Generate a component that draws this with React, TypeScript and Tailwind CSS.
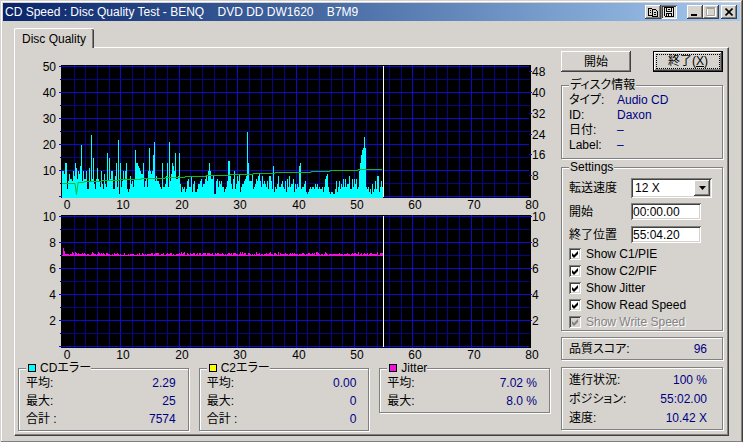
import { ReactNode, useState } from 'react'

const FONT = "font-['Liberation_Sans','Noto_Sans_CJK_JP',sans-serif] [font-feature-settings:'palt']"
const RAISED = 'bg-[#d6d3ce] shadow-[inset_-1px_-1px_#404040,inset_1px_1px_#fff,inset_-2px_-2px_#808080]'
const SUNKEN = 'shadow-[inset_1px_1px_#808080,inset_-1px_-1px_#fff,inset_2px_2px_#404040,inset_-2px_-2px_#d6d3ce]'
const ETCHED = 'border border-[#808080] shadow-[1px_1px_0_#fff,inset_1px_1px_0_#fff]'

// plot geometry
const LEFT = 44
const TOP = 5
const BOTTOM = 135
const UNIT = 5.84

// one value per sample, 0-50
const errors = [
  10, 10, 9, 13, 13, 3, 6, 9, 7, 7, 6, 10, 8, 13, 11, 7, 10, 9, 12, 20,
  6, 10, 7, 7, 10, 3, 3, 11, 6, 24, 7, 15, 5, 3, 7, 11, 7, 6, 4, 10,
  5, 3, 9, 5, 4, 17, 6, 15, 7, 10, 10, 3, 3, 8, 13, 4, 22, 1, 13, 4,
  6, 10, 7, 10, 13, 3, 2, 3, 8, 5, 6, 4, 7, 18, 13, 13, 12, 11, 10, 9,
  9, 13, 4, 6, 7, 4, 10, 19, 10, 9, 10, 16, 21, 6, 8, 6, 6, 5, 4, 3,
  13, 4, 4, 5, 8, 13, 4, 21, 6, 9, 13, 12, 10, 17, 7, 7, 8, 17, 5, 2,
  4, 3, 4, 2, 3, 6, 7, 4, 4, 8, 2, 5, 6, 2, 2, 3, 5, 5, 6, 7,
  4, 5, 5, 7, 8, 6, 10, 13, 10, 7, 7, 8, 1, 1, 6, 7, 4, 6, 5, 6,
  4, 4, 2, 3, 4, 6, 14, 14, 8, 5, 3, 7, 10, 3, 5, 8, 6, 9, 2, 4,
  5, 5, 6, 7, 8, 25, 13, 6, 6, 6, 9, 3, 4, 5, 7, 6, 8, 9, 6, 4,
  8, 5, 6, 5, 4, 6, 3, 8, 8, 6, 3, 12, 2, 4, 3, 5, 8, 4, 4, 5,
  6, 4, 3, 6, 2, 7, 4, 8, 4, 5, 5, 7, 2, 5, 3, 5, 4, 12, 13, 3,
  4, 4, 5, 6, 2, 1, 2, 3, 4, 3, 4, 4, 3, 5, 4, 5, 3, 4, 3, 3,
  4, 2, 4, 7, 8, 9, 4, 2, 1, 2, 2, 1, 1, 3, 6, 2, 4, 6, 3, 5,
  4, 7, 4, 7, 4, 5, 5, 8, 3, 3, 7, 4, 7, 5, 7, 3, 4, 10, 13, 16,
  18, 19, 23, 19, 4, 3, 4, 2, 3, 1, 5, 2, 3, 6, 3, 8, 8, 2, 4, 6,
  4,
]

// pixels above the 7 % base line
const jitter = errors.map((_, i) => {
  if (i === 1) return 8
  if (i === 2) return 5
  const s = Math.sin(i * 12.9898) * 43758.5453
  const n = s - Math.floor(s)
  return n > 0.95 ? 4 : n > 0.65 ? 3 : n > 0.25 ? 2 : 1
})

type PlotProps = {
  name: string
  max: number
  labels: number[]
  right: number[]
  children: ReactNode
}

function Plot({ name, max, labels, right, children }: PlotProps) {
  const y = (v: number) => Math.round(BOTTOM - (v / max) * (BOTTOM - TOP))
  const steps = Array.from({ length: 11 }, (_, i) => i)
  return (
    <svg viewBox="0 0 532 150" className="block h-auto w-full overflow-visible text-xs" role="img" aria-label={name}>
      <rect x="43" y="3" width="470" height="133" fill="#000" />
      <g shapeRendering="crispEdges">
        {Array.from({ length: 39 }, (_, i) => i + 1).map((i) => (
          <rect key={i} x={Math.round(LEFT + i * 2 * UNIT)} y="3" width="1" height="133" fill={i % 5 === 0 ? '#0c0cd0' : '#060684'} />
        ))}
        {steps.map((i) => (
          <rect
            key={i}
            x={i % 2 === 0 ? 41 : 42}
            y={y((max / 10) * i) - 1}
            width="470"
            height="1"
            fill={i % 2 === 0 ? '#0c0cd0' : '#060684'}
          />
        ))}
        {right.map((v) => (
          <rect key={v} x="511" y={y(v) - 1} width="3" height="1" fill="#0c0cd0" />
        ))}
      </g>
      {children}
      <rect x="365" y="4" width="1" height="131" fill="#fff" />
      <g fill="#000">
        {labels.map((v) => (
          <text key={v} x="38" y={y(v) + 4} textAnchor="end">{v}</text>
        ))}
        {right.map((v) => (
          <text key={v} x="514" y={y(v) + 4}>{v}</text>
        ))}
        {[0, 10, 20, 30, 40, 50, 60, 70, 80].map((v) => (
          <text key={v} x={Math.round(LEFT + v * UNIT) + (v === 0 ? 5 : 3)} y="147" textAnchor="middle">{v}</text>
        ))}
      </g>
    </svg>
  )
}

function ErrorPlot() {
  const bars = errors.map((v, i) => `M${LEFT + i} ${BOTTOM + 1}v${-Math.round(v * 2.6 + 1)}h1v${Math.round(v * 2.6 + 1)}z`).join('')
  return (
    <Plot name="CDエラー" max={50} labels={[10, 20, 30, 40, 50]} right={[8, 16, 24, 32, 40, 48]}>
      <path d={bars} fill="#00ffff" shapeRendering="crispEdges" />
      <path
        d="M44 121.5H57L58.5 132.500L60 120.500H66V119.500H84V118.500H101V117.500H123V116.500H147V115.500H167V114.500H188V113.500H212V112.500H235V111.500H257V110.500H293V109.500H312V108.500H340V107.500H364"
        fill="none"
        stroke="#10b828"
      />
    </Plot>
  )
}

function JitterPlot() {
  const bars = jitter.map((h, i) => `M${LEFT + i} 44v${-h}h1v${h}z`).join('')
  return (
    <Plot name="Jitter" max={10} labels={[2, 4, 6, 8, 10]} right={[2, 4, 6, 8, 10]}>
      <path d={bars} fill="#f010e0" shapeRendering="crispEdges" />
    </Plot>
  )
}

function Stats({ title, swatch, rows }: { title: string; swatch: string; rows: string[][] }) {
  return (
    <fieldset className={`min-w-0 pb-0.5 pl-[7px] pr-3 ${ETCHED}`}>
      <legend className="flex h-3 items-center gap-1 bg-[#d6d3ce] pl-0.5 leading-3">
        <span className={`size-2 border border-black ${swatch}`} />
        {title}
      </legend>
      {rows.map(([label, value]) => (
        <div key={label} className="flex h-[18px] items-center justify-between">
          <span>{label}</span>
          <span className="text-[#000084]">{value}</span>
        </div>
      ))}
    </fieldset>
  )
}

function Check({ label, disabled }: { label: string; disabled?: boolean }) {
  const [on, setOn] = useState(true)
  return (
    <label className={`flex h-[17px] items-center gap-[5px] ${disabled ? 'text-[#848284] [text-shadow:1px_1px_#fff]' : ''}`}>
      <span className="relative size-3">
        <input
          type="checkbox"
          checked={on}
          disabled={disabled}
          onChange={(e) => setOn(e.target.checked)}
          className={`block size-3 appearance-none bg-white disabled:bg-[#d6d3ce] ${SUNKEN}`}
        />
        {on && (
          <svg viewBox="0 0 12 12" className="pointer-events-none absolute inset-0 size-3" fill="currentColor">
            <path d="M3 5l2 2 4-4v3l-4 4-2-2z" />
          </svg>
        )}
      </span>
      {label}
    </label>
  )
}

function TitleBar() {
  return (
    <header className="flex h-[18px] items-center bg-linear-to-r from-[#0a246a] to-[#a6caf0] pl-0.5 pr-[3px] text-white">
      <h1 className="flex-1 whitespace-pre">CD Speed : Disc Quality Test - BENQ    DVD DD DW1620    B7M9</h1>
      <button aria-label="Copy" className={`grid h-3.5 w-4 place-items-center ${RAISED}`}>
        <svg width="10" height="9" viewBox="0 0 10 9" fill="none" stroke="#000" shapeRendering="crispEdges">
          <path d="M4.500 7.500h-4v-7h3l1 1M4.500 1.500h3l2 2v5h-5zM2 2.500h1M2 4.500h1M6 4.500h2M6 6.500h2" />
        </svg>
      </button>
      <button aria-label="Save" className={`grid h-3.5 w-4 place-items-center bg-[#e6e4e0] ${SUNKEN}`}>
        <svg width="10" height="10" viewBox="0 0 10 10" fill="none" stroke="#000" shapeRendering="crispEdges">
          <path d="M.5.5h9v9h-8l-1-1zM2.500 1v3.500h5V1M4 2.500h2M2.500 9V6.500h5V9M4.500 7v2" />
        </svg>
      </button>
      <button aria-label="Minimize" className={`ml-2.5 grid h-3.5 w-4 place-items-center ${RAISED}`}>
        <svg width="10" height="9" viewBox="0 0 10 9"><path d="M1 6h6v2H1z" fill="#000" /></svg>
      </button>
      <button aria-label="Maximize" disabled className={`grid h-3.5 w-4 place-items-center ${RAISED}`}>
        <svg width="10" height="10" viewBox="0 0 10 10" fill="none">
          <path d="M1.500 1v8.500h8V1" stroke="#fff" />
          <path d="M.5 1.500h8v7h-8zM0 .5h9" stroke="#a5a29c" />
        </svg>
      </button>
      <button aria-label="Close" className={`ml-0.5 grid h-3.5 w-4 place-items-center ${RAISED}`}>
        <svg width="8" height="8" viewBox="0 0 8 8" stroke="#000" strokeWidth="1.600"><path d="M.5.5l7 7M7.500.5l-7 7" /></svg>
      </button>
    </header>
  )
}

export default function App() {
  const [speed, setSpeed] = useState('12 X')
  const [start, setStart] = useState('00:00.00')
  const [end, setEnd] = useState('55:04.20')

  const info = [
    ['タイプ:', 'Audio CD'],
    ['ID:', 'Daxon'],
    ['日付:', '–'],
    ['Label:', '–'],
  ]
  const progress = [
    ['進行状況:', '100 %'],
    ['ポジション:', '55:02.00'],
    ['速度:', '10.42 X'],
  ]

  return (
    <div className={`flex min-h-screen flex-col bg-[#d6d3ce] p-[3px] text-xs leading-4 text-black shadow-[inset_-1px_-1px_#404040,inset_1px_1px_#d6d3ce,inset_-2px_-2px_#808080,inset_2px_2px_#fff] ${FONT}`}>
      <TitleBar />
      <main className="flex flex-1 flex-col px-[11px] pb-1 pt-[7px]">
        <div role="tablist" className="flex">
          <button
            role="tab"
            aria-selected="true"
            className="relative -mb-px h-5 rounded-t-xs border-l border-t border-white bg-[#d6d3ce] pl-[7px] pr-2 shadow-[inset_-1px_0_#404040,inset_-2px_0_#808080]"
          >
            Disc Quality
          </button>
        </div>
        <div className="flex flex-1 gap-[11px] border border-b-[#404040] border-l-white border-r-[#404040] border-t-white pb-1 pl-[3px] pr-[5px] pt-[3px] shadow-[inset_-1px_-1px_#808080]">
          <section className="min-w-0 flex-1 pt-[11px]">
            <ErrorPlot />
            <JitterPlot />
            <div className="grid grid-cols-3 items-start gap-2.5">
              <Stats title="CDエラー" swatch="bg-[#00ffff]" rows={[['平均:', '2.29'], ['最大:', '25'], ['合計 :', '7574']]} />
              <Stats title="C2エラー" swatch="bg-[#ffff00]" rows={[['平均:', '0.00'], ['最大:', '0'], ['合計 :', '0']]} />
              <Stats title="Jitter" swatch="bg-[#f010e0]" rows={[['平均:', '7.02 %'], ['最大:', '8.0 %']]} />
            </div>
          </section>

          <aside className="flex w-[162px] flex-col">
            <div className="flex justify-between">
              <button className={`h-[21px] w-[70px] ${RAISED}`}>開始</button>
              <button className={`h-[21px] w-[70px] border border-black p-0.5 ${RAISED}`}>
                <span className="block border border-dotted border-black leading-[13px]">
                  終了(<u>X</u>)
                </span>
              </button>
            </div>

            <fieldset className={`mt-[7px] pb-1.5 pl-[7px] pt-px ${ETCHED}`}>
              <legend className="bg-[#d6d3ce] px-px leading-3">ディスク情報</legend>
              {info.map(([label, value]) => (
                <div key={label} className="flex h-[15px] items-center">
                  <span className="w-12">{label}</span>
                  <span className="text-[#000084]">{value}</span>
                </div>
              ))}
            </fieldset>

            <fieldset className={`mt-0.5 pl-[7px] pt-[5px] ${ETCHED}`}>
              <legend className="bg-[#d6d3ce] px-px leading-3">Settings</legend>
              <div className="flex items-center">
                <label htmlFor="speed" className="w-[62px]">転送速度</label>
                <div className="relative">
                  <select
                    id="speed"
                    value={speed}
                    onChange={(e) => setSpeed(e.target.value)}
                    className={`block h-5 w-[81px] appearance-none bg-white pl-1 ${SUNKEN}`}
                  >
                    <option>12 X</option>
                    <option>24 X</option>
                  </select>
                  <span className={`pointer-events-none absolute bottom-0.5 right-0.5 top-0.5 grid w-4 place-items-center ${RAISED}`}>
                    <svg width="7" height="4" viewBox="0 0 7 4"><path d="M0 0h7L3.500 4z" /></svg>
                  </span>
                </div>
              </div>
              <div className="mt-[5px] flex items-center">
                <label htmlFor="start" className="w-[62px]">開始</label>
                <input id="start" value={start} onChange={(e) => setStart(e.target.value)} className={`h-[17px] w-[70px] bg-white px-0.5 ${SUNKEN}`} />
              </div>
              <div className="mb-0.5 mt-1.5 flex items-center">
                <label htmlFor="end" className="w-[62px]">終了位置</label>
                <input id="end" value={end} onChange={(e) => setEnd(e.target.value)} className={`h-[17px] w-[70px] bg-white px-0.5 ${SUNKEN}`} />
              </div>
              <Check label="Show C1/PIE" />
              <Check label="Show C2/PIF" />
              <Check label="Show Jitter" />
              <Check label="Show Read Speed" />
              <Check label="Show Write Speed" disabled />
            </fieldset>

            <div className={`mt-1.5 flex h-[23px] items-center justify-between pl-[7px] pr-[15px] ${ETCHED}`}>
              <span>品質スコア:</span>
              <span className="text-[#000084]">96</span>
            </div>

            <div className={`mt-[7px] py-0.5 pl-[7px] pr-[15px] ${ETCHED}`}>
              {progress.map(([label, value]) => (
                <div key={label} className="flex h-[19px] items-center justify-between">
                  <span>{label}</span>
                  <span className="text-[#000084]">{value}</span>
                </div>
              ))}
            </div>
          </aside>
        </div>
      </main>
    </div>
  )
}
